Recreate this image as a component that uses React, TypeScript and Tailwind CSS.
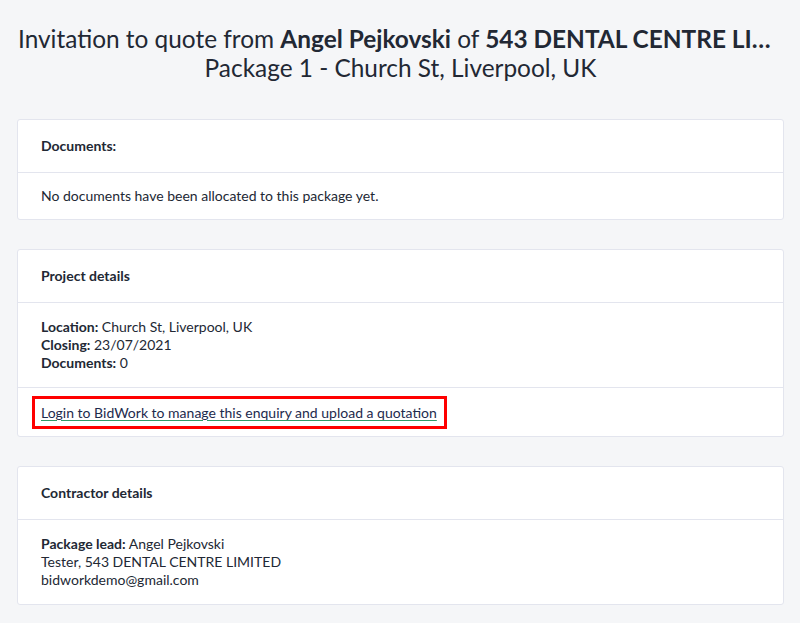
export default function App() {
  return (
    <div className="min-h-screen bg-[#f5f6f8] font-['Lato',sans-serif] text-[#222834] pl-[17px] pr-[16px] pt-[24px] pb-6">
      <h1 className="text-center text-[24.4px] leading-[29px] font-normal">
        <div className="whitespace-nowrap text-left pl-px">
          Invitation to quote from <span className="font-bold">Angel Pejkovski</span> of{" "}
          <span className="font-bold">543 DENTAL CENTRE LI…</span>
        </div>
        <div>Package 1 - Church St, Liverpool, UK</div>
      </h1>

      <div className="mt-[37px] flex flex-col gap-[29px] text-[14px]">
        <div className="bg-white border border-[#e3e5ee] rounded-[3px]">
          <div className="pl-[23px] pr-6 py-4 leading-5 font-bold border-b border-[#e3e5ee]">Documents:</div>
          <div className="pl-[23px] pr-6 py-[14px] leading-[18px]">No documents have been allocated to this package yet.</div>
        </div>

        <div className="bg-white border border-[#e3e5ee] rounded-[3px]">
          <div className="pl-[23px] pr-6 py-4 leading-5 font-bold border-b border-[#e3e5ee]">Project details</div>
          <div className="pl-[23px] pr-6 py-[15px] leading-[18px] border-b border-[#e3e5ee]">
            <div>
              <span className="font-bold">Location:</span> Church St, Liverpool, UK
            </div>
            <div>
              <span className="font-bold">Closing:</span> 23/07/2021
            </div>
            <div>
              <span className="font-bold">Documents:</span> 0
            </div>
          </div>
          <div className="flex px-[14px] pt-2 pb-[7px]">
            <a
              href="#"
              className="block border-[3px] border-[#ff0000] pl-[6px] pr-[7px] py-[4px] leading-[19px] text-[#1d2a4d] underline decoration-[#2f9a6a] underline-offset-2"
            >
              Login to BidWork to manage this enquiry and upload a quotation
            </a>
          </div>
        </div>

        <div className="bg-white border border-[#e3e5ee] rounded-[3px]">
          <div className="pl-[23px] pr-6 py-4 leading-5 font-bold border-b border-[#e3e5ee]">Contractor details</div>
          <div className="pl-[23px] pr-6 py-[15px] leading-[18px]">
            <div>
              <span className="font-bold">Package lead:</span> Angel Pejkovski
            </div>
            <div>Tester, 543 DENTAL CENTRE LIMITED</div>
            <div>bidworkdemo@gmail.com</div>
          </div>
        </div>
      </div>
    </div>
  );
}
